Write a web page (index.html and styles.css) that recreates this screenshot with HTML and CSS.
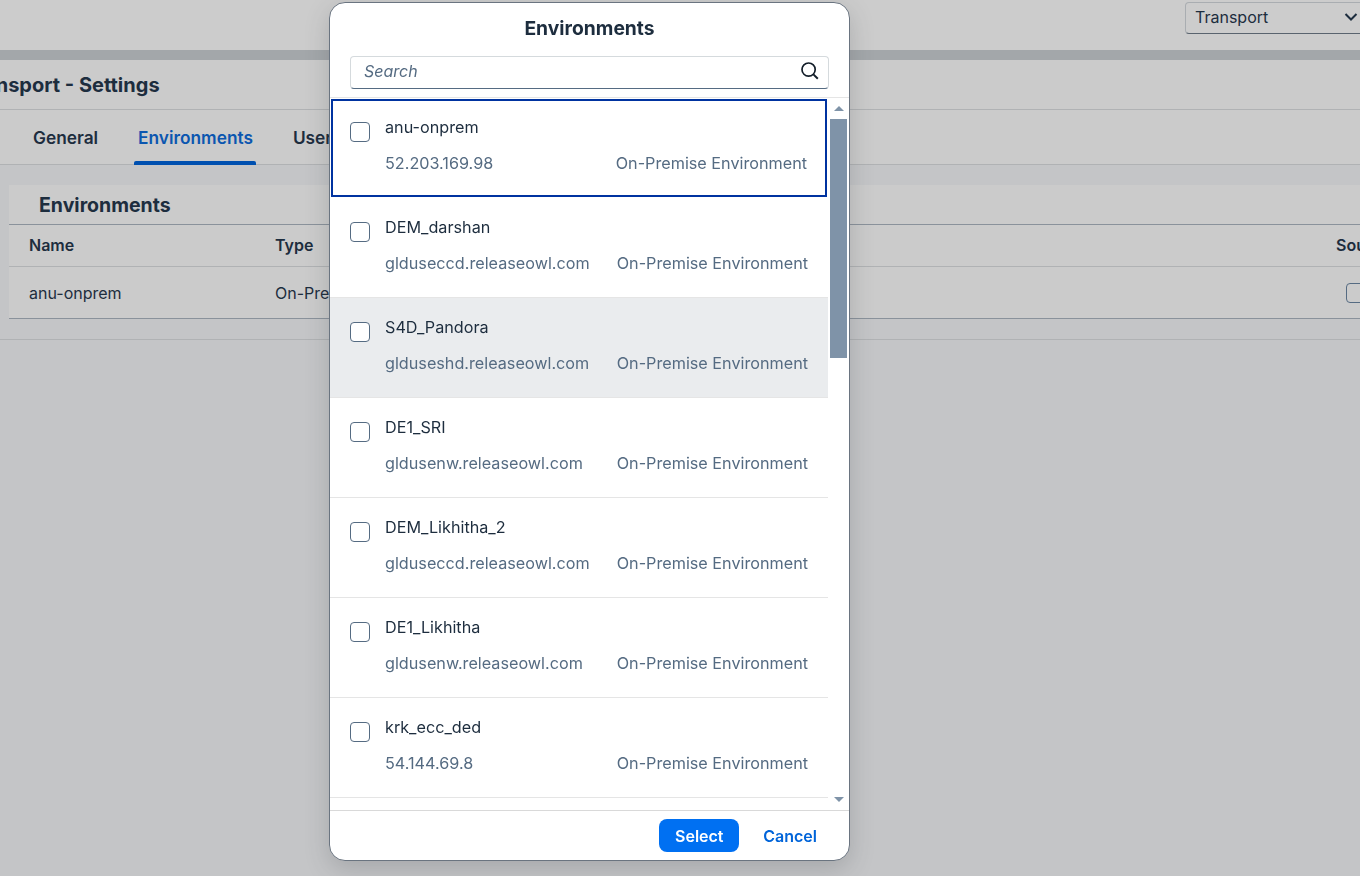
FILE: index.html
```html
<!DOCTYPE html>
<html>
	<head>
		<meta charset="UTF-8">
		<title>Transport - Settings</title>
		<link rel="stylesheet" href="styles.css">
	</head>
	<body>
		<div class="page">
			<div class="topbar">
				<div class="picker">
					<span>Transport</span>
					<svg class="chev" width="14" height="10" viewBox="0 0 14 10"><path d="M1.5 2 L7 7.5 L12.5 2" fill="none" stroke="#1d2d3e" stroke-width="2"/></svg>
				</div>
			</div>
			<div class="strip"></div>
			<div class="title"><h1>Transport - Settings</h1></div>
			<div class="tabs">
				<span class="tab">General</span>
				<span class="tab on">Environments</span>
				<span class="tab">Users</span>
			</div>
			<div class="content">
				<div class="panel">
					<h2>Environments</h2>
					<div class="thead">
						<span class="c1">Name</span>
						<span class="c2">Type</span>
						<span class="c3">Source</span>
					</div>
					<div class="trow">
						<span class="c1">anu-onprem</span>
						<span class="c2">On-Premise Environment</span>
						<span class="c3"><i class="tick"></i></span>
					</div>
				</div>
			</div>
		</div>

		<div class="dialog">
			<div class="dlg-head">Environments</div>
			<div class="dlg-search">
				<div class="search">
					<span>Search</span>
					<svg width="20" height="20" viewBox="0 0 20 20"><circle cx="8.6" cy="8.6" r="6.6" fill="none" stroke="#131e29" stroke-width="1.7"/><path d="M13.4 13.4 L17.8 17.8" stroke="#131e29" stroke-width="2"/></svg>
				</div>
			</div>
			<div class="dlg-body">
				<ul class="list">
					<li class="focus"><i class="box"></i><div class="txt"><p class="name">anu-onprem</p><p class="sub"><span>52.203.169.98</span><span>On-Premise Environment</span></p></div></li>
					<li><i class="box"></i><div class="txt"><p class="name">DEM_darshan</p><p class="sub"><span>glduseccd.releaseowl.com</span><span>On-Premise Environment</span></p></div></li>
					<li class="hover"><i class="box"></i><div class="txt"><p class="name">S4D_Pandora</p><p class="sub"><span>glduseshd.releaseowl.com</span><span>On-Premise Environment</span></p></div></li>
					<li><i class="box"></i><div class="txt"><p class="name">DE1_SRI</p><p class="sub"><span>gldusenw.releaseowl.com</span><span>On-Premise Environment</span></p></div></li>
					<li><i class="box"></i><div class="txt"><p class="name">DEM_Likhitha_2</p><p class="sub"><span>glduseccd.releaseowl.com</span><span>On-Premise Environment</span></p></div></li>
					<li><i class="box"></i><div class="txt"><p class="name">DE1_Likhitha</p><p class="sub"><span>gldusenw.releaseowl.com</span><span>On-Premise Environment</span></p></div></li>
					<li><i class="box"></i><div class="txt"><p class="name">krk_ecc_ded</p><p class="sub"><span>54.144.69.8</span><span>On-Premise Environment</span></p></div></li>
				</ul>
				<div class="scroll">
					<i class="arrow up"></i>
					<div class="track"><div class="thumb"></div></div>
					<i class="arrow down"></i>
				</div>
			</div>
			<div class="dlg-foot">
				<button class="btn-main">Select</button>
				<button class="btn-link">Cancel</button>
			</div>
		</div>
	</body>
</html>
```

FILE: styles.css
```css
html, body{
	margin: 0;
	padding: 0;
	height: 100%;
	overflow: hidden;
}
body{
	background: #c4c5c7;
	font-family: Inter, "Liberation Sans", sans-serif;
	font-size: 16px;
	color: #1d2d3e;
}
.page{
	height: 876px;
	overflow: hidden;
}
.topbar{
	height: 50px;
	background: #cccccc;
	display: flex;
	justify-content: flex-end;
	padding-top: 2px;
	box-sizing: border-box;
}
.picker{
	flex: none;
	width: 190px;
	margin-right: -15px;
	height: 32px;
	box-sizing: border-box;
	border: 1px solid #a9adb1;
	border-bottom-color: #59636e;
	border-radius: 4px;
	display: flex;
	align-items: center;
	justify-content: space-between;
	padding: 0 16px 3px 9px;
	font-size: 16px;
}
.strip{
	height: 10px;
	background: #a3a7aa;
}
.title{
	height: 49px;
	background: #cbcbcb;
	border-bottom: 1px solid #b0b2b4;
	display: flex;
	align-items: center;
}
.title h1{
	margin: 1px 0 0 -36px;
	font-size: 20px;
	font-weight: 700;
	white-space: nowrap;
}
.tabs{
	height: 55px;
	box-sizing: border-box;
	background: #cbcbcb;
	border-bottom: 1px solid #b0b2b4;
	display: flex;
	padding-left: 33px;
	gap: 40px;
}
.tab{
	font-weight: 600;
	font-size: 17.3px;
	line-height: 56px;
	height: 55px;
	box-sizing: border-box;
}
.tab.on{
	color: #0b56b0;
	position: relative;
}
.tab.on:after{
	content: "";
	position: absolute;
	left: -4px;
	right: -3px;
	bottom: 0;
	height: 4px;
	border-radius: 2px 2px 0 0;
	background: #0050b0;
}
.content{
	padding: 20px 0 20px 9px;
	border-bottom: 1px solid #b0b2b4;
}
.panel{
	width: 1400px;
	background: #cbcbcb;
	border-bottom: 1px solid #8a929b;
}
.panel h2{
	margin: 0;
	height: 40px;
	box-sizing: border-box;
	padding-left: 30px;
	line-height: 41px;
	font-size: 19.5px;
	font-weight: 700;
	border-bottom: 1px solid #8a929b;
}
.thead, .trow{
	display: flex;
	padding-left: 20px;
	align-items: center;
}
.thead{
	height: 42px;
	box-sizing: border-box;
	padding-bottom: 2px;
	font-weight: 600;
	border-bottom: 1px solid #b0b2b4;
}
.trow{
	height: 52px;
	margin-bottom: -1px;
}
.c1{
	width: 246px;
	flex: none;
}
.c2{
	flex: none;
	width: 1061px;
	white-space: nowrap;
}
.c3{
	flex: none;
	white-space: nowrap;
}
.tick{
	display: block;
	width: 20px;
	height: 20px;
	margin-left: 10px;
	box-sizing: border-box;
	border: 1px solid #556b82;
	border-radius: 4px;
}

/* dialog sits over the page */
.dialog{
	position: fixed;
	left: 329px;
	top: 2px;
	width: 521px;
	height: 859px;
	box-sizing: border-box;
	background: #fff;
	border: 1px solid #6a7480;
	border-radius: 16px;
	box-shadow: 0 8px 24px rgba(60, 65, 70, .22);
	display: flex;
	flex-direction: column;
	overflow: hidden;
}
.dlg-head{
	flex: none;
	height: 47px;
	line-height: 51px;
	text-align: center;
	font-size: 19.3px;
	font-weight: 700;
}
.dlg-search{
	flex: none;
	height: 48px;
	padding: 6px 20px 0 20px;
	box-sizing: border-box;
	border-bottom: 1px solid #e5e5e5;
}
.search{
	height: 33px;
	box-sizing: border-box;
	border: 1px solid #d5dadd;
	border-bottom-color: #556b82;
	border-radius: 4px;
	display: flex;
	align-items: center;
	justify-content: space-between;
	padding: 0 8px 3px 13px;
	font-style: italic;
	color: #556b82;
}
.dlg-body{
	flex: 1;
	display: flex;
	min-height: 0;
	overflow: hidden;
}
.list{
	margin: 0;
	padding: 0;
	list-style: none;
	width: 498px;
	flex: none;
	font-size: 16.2px;
}
.list li{
	height: 100px;
	box-sizing: border-box;
	padding: 0 20px 0 20px;
	border-bottom: 1px solid #e5e5e5;
	display: flex;
}
.list li.focus{
	border: 2px solid #0033a0;
	padding: 0 18px 0 17px;
	height: 98px;
	margin: 1px 0 1px 1px;
	width: 496px;
}
.list li.hover{
	background: #eaecee;
}
.box{
	flex: none;
	width: 20px;
	height: 20px;
	margin-top: 24px;
	box-sizing: border-box;
	background: #fff;
	border: 1px solid #556b82;
	border-radius: 4px;
}
.focus .box{
	margin-top: 21px;
}
.txt{
	flex: 1;
	margin-left: 15px;
}
.name{
	margin: 18px 0 0;
	line-height: 22px;
}
.focus .name{
	margin-top: 15px;
}
.sub{
	margin: 14px 0 0;
	line-height: 22px;
	display: flex;
	justify-content: space-between;
	color: #556b82;
}
.scroll{
	width: 17px;
	margin-left: 2px;
	display: flex;
	flex-direction: column;
	align-items: center;
}
.arrow{
	flex: none;
	width: 0;
	height: 0;
	border-left: 5px solid transparent;
	border-right: 5px solid transparent;
}
.arrow.up{
	margin: 8px 0 8px;
	border-bottom: 5px solid #7f93a8;
}
.arrow.down{
	margin: 6px 0 8px;
	border-top: 5px solid #7f93a8;
}
.track{
	flex: 1;
	width: 100%;
}
.thumb{
	height: 239px;
	background: #7f93a8;
}
.dlg-foot{
	flex: none;
	height: 50px;
	box-sizing: border-box;
	border-top: 1px solid #d9d9d9;
	display: flex;
	align-items: center;
	justify-content: flex-end;
	padding-right: 16px;
	gap: 8px;
}
button{
	font-family: inherit;
	font-size: 16px;
	font-weight: 600;
	border: none;
	cursor: pointer;
}
.btn-main{
	width: 80px;
	height: 33px;
	border-radius: 8px;
	background: #0070f2;
	color: #fff;
}
.btn-link{
	background: none;
	color: #0064d9;
	height: 33px;
	padding: 0 16px;
}
```
